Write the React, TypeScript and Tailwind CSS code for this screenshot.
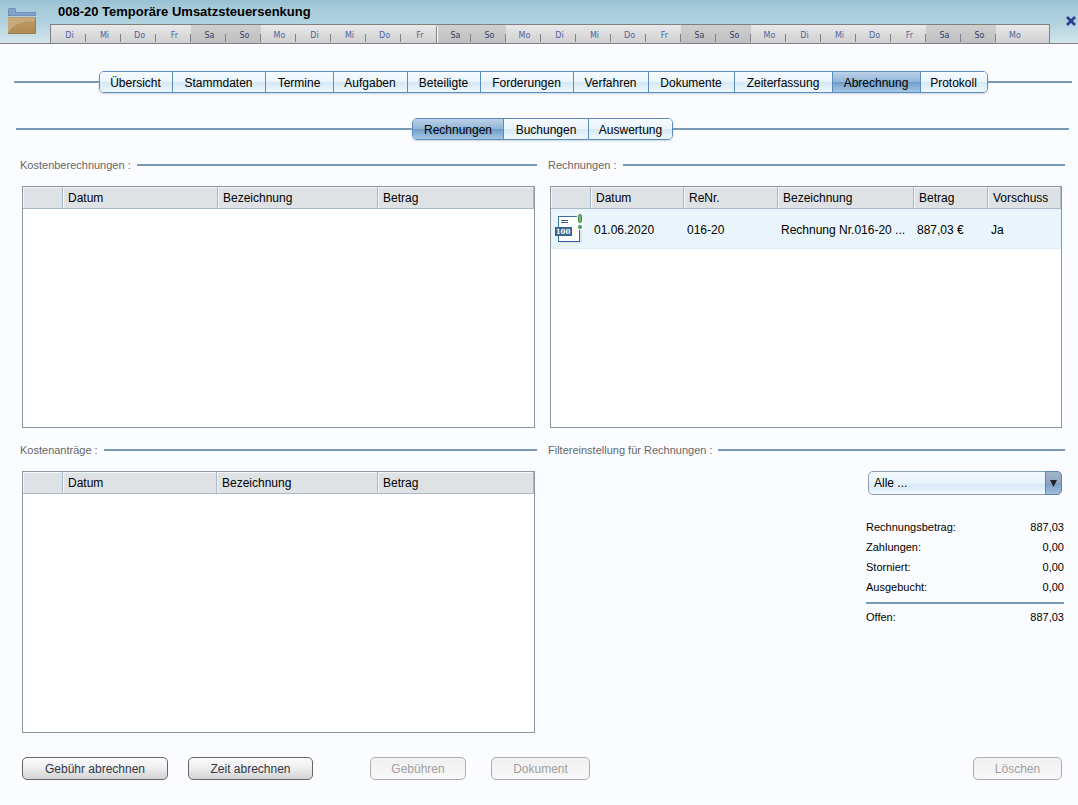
import type { ReactNode } from 'react';

type Column = { label: string; width: string };
type Tab = { label: string; width: string };

const WEEKDAYS = ['Di', 'Mi', 'Do', 'Fr', 'Sa', 'So', 'Mo'];
const CALENDAR_DAYS = 28;
const MONTH_START_INDEX = 11;

const MAIN_TABS: Tab[] = [
  { label: 'Übersicht', width: 'w-[73px]' },
  { label: 'Stammdaten', width: 'w-[93px]' },
  { label: 'Termine', width: 'w-[68px]' },
  { label: 'Aufgaben', width: 'w-[74px]' },
  { label: 'Beteiligte', width: 'w-[73px]' },
  { label: 'Forderungen', width: 'w-[93px]' },
  { label: 'Verfahren', width: 'w-[75px]' },
  { label: 'Dokumente', width: 'w-[86px]' },
  { label: 'Zeiterfassung', width: 'w-[98px]' },
  { label: 'Abrechnung', width: 'w-[88px]' },
  { label: 'Protokoll', width: 'w-[66px]' },
];

const SUB_TABS: Tab[] = [
  { label: 'Rechnungen', width: 'w-[91px]' },
  { label: 'Buchungen', width: 'w-[85px]' },
  { label: 'Auswertung', width: 'w-[83px]' },
];

const CALCULATION_COLUMNS: Column[] = [
  { label: '', width: 'w-[40px]' },
  { label: 'Datum', width: 'w-[155px]' },
  { label: 'Bezeichnung', width: 'w-[160px]' },
  { label: 'Betrag', width: '' },
];

const REQUEST_COLUMNS: Column[] = [
  { label: '', width: 'w-[40px]' },
  { label: 'Datum', width: 'w-[154px]' },
  { label: 'Bezeichnung', width: 'w-[161px]' },
  { label: 'Betrag', width: '' },
];

const INVOICE_COLUMNS: Column[] = [
  { label: '', width: 'w-[40px]' },
  { label: 'Datum', width: 'w-[93px]' },
  { label: 'ReNr.', width: 'w-[94px]' },
  { label: 'Bezeichnung', width: '' },
  { label: 'Betrag', width: 'w-[74px]' },
  { label: 'Vorschuss', width: 'w-[73px]' },
];

const TOTALS = [
  ['Rechnungsbetrag:', '887,03'],
  ['Zahlungen:', '0,00'],
  ['Storniert:', '0,00'],
  ['Ausgebucht:', '0,00'],
];

function FolderIcon() {
  return (
    <svg width="28" height="26" viewBox="0 0 28 26" aria-hidden="true">
      <defs>
        <linearGradient id="folder" x1="0" y1="0" x2="0" y2="1">
          <stop offset="0" stopColor="#bd9c6c" />
          <stop offset="1" stopColor="#b08b52" />
        </linearGradient>
      </defs>
      <path d="M0 8V1.500Q0 0 1.500 0H6.500Q8 0 8 1.500V4H28V8Z" fill="#6f8fbc" />
      <path d="M1 7V1H7V5H27V7Z" fill="#86a2cb" />
      <rect y="9" width="28" height="17" rx="1" fill="url(#folder)" />
      <path d="M0 10H28V13C13 13 4 17 0 25Z" fill="#c7a97c" />
      <path d="M0 25.500H28M27.500 10V26" stroke="#977a50" fill="none" />
    </svg>
  );
}

function InvoiceIcon() {
  return (
    <svg width="30" height="32" viewBox="0 0 30 32" role="img" aria-label="Rechnung" className="block">
      <rect x="5" y="5" width="22" height="25" fill="#c9d5dd" opacity="0.600" />
      <rect x="3.500" y="3.500" width="21" height="25" fill="#fff" stroke="#3c6ea8" />
      <path d="M3 28.500H25" stroke="#2d5f9e" />
      <path d="M6 7.500H13M6 9.500H13" stroke="#2f5f9f" />
      <rect x="22" y="0" width="7" height="17" fill="#f2f8fb" />
      <rect x="23.500" y="1.500" width="3" height="8" rx="1.500" fill="#79b56e" stroke="#4a8c4c" />
      <circle cx="25" cy="14" r="2" fill="#4f9a56" />
      <rect x="0" y="14" width="17" height="9" fill="#3a628f" />
      <text x="8" y="21" textAnchor="middle" fill="#fff" fontSize="7" fontWeight="bold" fontFamily="DejaVu Serif, serif">
        100
      </text>
    </svg>
  );
}

function TabBar({ tabs, active, label }: { tabs: Tab[]; active: string; label: string }) {
  return (
    <nav aria-label={label} className="flex items-center">
      <div className="h-[2px] flex-1 bg-[#7799b7]" />
      <div className="flex h-[22px] overflow-hidden rounded-[5px] border border-[#5b8bc0] shadow-[0_1px_2px_#c8d2dc]">
        {tabs.map((tab) => (
          <button
            key={tab.label}
            type="button"
            aria-current={tab.label === active ? 'page' : undefined}
            className={`${tab.width} shrink border-r border-[#5b8bc0] text-center text-[12px] leading-[22px] whitespace-nowrap last:border-r-0 ${
              tab.label === active
                ? 'bg-[linear-gradient(#bcd2e8,#91b4d7_50%,#6f9dca_52%,#a5c8e3)]'
                : 'bg-[linear-gradient(#f6fbfe,#e9f4fb_50%,#d5e8f4_52%,#eef8fc)]'
            }`}
          >
            {tab.label}
          </button>
        ))}
      </div>
      <div className="h-[2px] flex-1 bg-[#7799b7]" />
    </nav>
  );
}

function Section({ title, children }: { title: string; children: ReactNode }) {
  return (
    <section className="min-w-0">
      <div className="flex h-[14px] items-center gap-[6px]">
        <h2 className="text-[11px] leading-[14px] text-[#666]">{title}</h2>
        <div className="h-[2px] flex-1 bg-[#7799b7]" />
      </div>
      {children}
    </section>
  );
}

function DataTable({ columns, label, children }: { columns: Column[]; label: string; children?: ReactNode }) {
  return (
    <table aria-label={label} className="w-full table-fixed border-separate border-spacing-0 text-left text-[12px]">
      <thead>
        <tr className="h-[22px]">
          {columns.map((column, i) => (
            <th key={i} className={`${column.width} p-0 font-normal`}>
              <div className="h-[22px] border-r border-b border-[#a9b9c9] bg-[#dee2e5] pl-[5px] leading-[22px] shadow-[inset_1px_1px_0_#f3f6f8]">
                {column.label}
              </div>
            </th>
          ))}
        </tr>
      </thead>
      <tbody>{children}</tbody>
    </table>
  );
}

function Cell({ children }: { children: ReactNode }) {
  return <td className="truncate border-b border-[#e0eef6] p-0 pt-[2px] pl-[3px]">{children}</td>;
}

function PushButton({ label, width, disabled }: { label: string; width: string; disabled?: boolean }) {
  return (
    <button
      type="button"
      disabled={disabled}
      className={`${width} h-[23px] rounded-[5px] border pt-px text-[12px] leading-[20px] ${
        disabled
          ? 'border-[#aaacae] bg-[linear-gradient(#f0f0f0,#f8f8f8)] text-[#a0a0a0]'
          : 'border-[#666] bg-[linear-gradient(#fafafa,#ededed_50%,#d2d2d2)] text-[#303848]'
      }`}
    >
      {label}
    </button>
  );
}

export default function App() {
  return (
    <div className="min-h-screen bg-[#fbfcff] text-black font-['Liberation_Sans',Arial,sans-serif]">
      <header className="flex h-[44px] border-b border-[#808080] bg-[linear-gradient(#97c0d3,#a7cbda_20%,#b0d1df_50%,#d3e5ea)]">
        <div className="w-[50px] pt-[8px] pl-[8px]">
          <FolderIcon />
        </div>
        <div className="flex min-w-0 flex-1 flex-col">
          <h1 className="h-[24px] pl-[8px] text-[13px] leading-[24px] font-bold">
            008-20 Temporäre Umsatzsteuersenkung
          </h1>
          <div className="flex h-[19px] border-x border-t border-[#808080] bg-[linear-gradient(#e8e8e8,#d0d0d0)]">
            {Array.from({ length: CALENDAR_DAYS }, (_, i) => {
              const weekend = i % 7 === 4 || i % 7 === 5;
              const beforeMonthStart = i === MONTH_START_INDEX - 1;
              return (
                <div
                  key={i}
                  className={`flex w-[35px] items-end ${
                    weekend ? 'bg-[linear-gradient(#cfcfcf,#bfbfbf)] text-[#34406a]' : 'text-[#4c64a0]'
                  }`}
                >
                  {i === MONTH_START_INDEX && <span className="h-[16px] w-[2px] border-r border-white bg-[#808080]" />}
                  <span className="flex-1 pl-[3px] text-center text-[8px] leading-[14px] font-['DejaVu_Sans',sans-serif]">
                    {WEEKDAYS[i % 7]}
                  </span>
                  {i < CALENDAR_DAYS - 1 && !beforeMonthStart && (
                    <span className="mb-[1px] h-[8px] w-px bg-[#808088]" />
                  )}
                </div>
              );
            })}
          </div>
        </div>
        <div className="flex w-[28px] justify-end pt-[16px] pr-[2px]">
          <button type="button" aria-label="Schließen" className="h-[10px] w-[10px]">
            <svg width="10" height="10" viewBox="0 0 10 10" aria-hidden="true">
              <path d="M1 1L9 9M9 1L1 9" stroke="#2e3f8f" strokeWidth="2.700" />
            </svg>
          </button>
        </div>
      </header>

      <main>
        <div className="pt-[27px] pr-[6px] pl-[14px]">
          <TabBar tabs={MAIN_TABS} active="Abrechnung" label="Akte" />
        </div>
        <div className="pt-[25px] pr-[9px] pl-[16px]">
          <TabBar tabs={SUB_TABS} active="Rechnungen" label="Abrechnung" />
        </div>

        <div className="grid grid-cols-2 gap-x-[11px] gap-y-[15px] pt-[18px] pr-[13px] pl-[20px]">
          <Section title="Kostenberechnungen :">
            <div className="mx-[2px] mt-[14px] h-[242px] border border-[#8c95a3] bg-white">
              <DataTable columns={CALCULATION_COLUMNS} label="Kostenberechnungen" />
            </div>
          </Section>

          <Section title="Rechnungen :">
            <div className="mt-[14px] mr-[3px] ml-[2px] h-[242px] border border-[#8c95a3] bg-white">
              <DataTable columns={INVOICE_COLUMNS} label="Rechnungen">
                <tr className="h-[40px] bg-[#eaf5fb]">
                  <td className="border-b border-[#e0eef6] p-0 pl-[4px]">
                    <InvoiceIcon />
                  </td>
                  <Cell>01.06.2020</Cell>
                  <Cell>016-20</Cell>
                  <Cell>Rechnung Nr.016-20 ...</Cell>
                  <Cell>887,03 €</Cell>
                  <Cell>Ja</Cell>
                </tr>
              </DataTable>
            </div>
          </Section>

          <Section title="Kostenanträge :">
            <div className="mx-[2px] mt-[14px] h-[262px] border border-[#8c95a3] bg-white">
              <DataTable columns={REQUEST_COLUMNS} label="Kostenanträge" />
            </div>
          </Section>

          <Section title="Filtereinstellung für Rechnungen :">
            <div className="mt-[14px] ml-auto w-[199px] pr-px">
              <div className="relative mx-[2px] h-[24px]">
                <select
                  aria-label="Filter für Rechnungen"
                  className="block h-[24px] w-full appearance-none rounded-[5px] border border-[#8c9db5] bg-[linear-gradient(#f4fafd,#e6f3fb_50%,#d9eaf6_60%,#f0f9fd)] pt-px pl-[5px] text-[12px] leading-[21px]"
                >
                  <option>Alle ...</option>
                </select>
                <span className="pointer-events-none absolute inset-y-0 right-0 flex w-[17px] items-center justify-center rounded-r-[5px] border border-[#5b87bd] bg-[linear-gradient(#a3b5ca,#8da5c3_50%,#7e9dc3_55%,#a0c0dc)]">
                  <svg width="7" height="7" viewBox="0 0 7 7" aria-hidden="true">
                    <path d="M0 0H7L3.500 7Z" fill="#222" />
                  </svg>
                </span>
              </div>
              <dl className="mt-[22px] text-[11px] leading-[20px]">
                {TOTALS.map(([name, value]) => (
                  <div key={name} className="flex justify-between">
                    <dt>{name}</dt>
                    <dd>{value}</dd>
                  </div>
                ))}
                <div className="mt-[5px] flex justify-between border-t-2 border-[#7799b7] pt-[3px]">
                  <dt>Offen:</dt>
                  <dd>887,03</dd>
                </div>
              </dl>
            </div>
          </Section>
        </div>

        <div className="flex pt-[24px] pr-[16px] pb-[24px] pl-[22px]">
          <div className="flex gap-[20px]">
            <PushButton label="Gebühr abrechnen" width="w-[146px]" />
            <PushButton label="Zeit abrechnen" width="w-[125px]" />
          </div>
          <div className="ml-[57px] flex gap-[25px]">
            <PushButton label="Gebühren" width="w-[96px]" disabled />
            <PushButton label="Dokument" width="w-[99px]" disabled />
          </div>
          <div className="ml-auto flex">
            <PushButton label="Löschen" width="w-[89px]" disabled />
          </div>
        </div>
      </main>
    </div>
  );
}
